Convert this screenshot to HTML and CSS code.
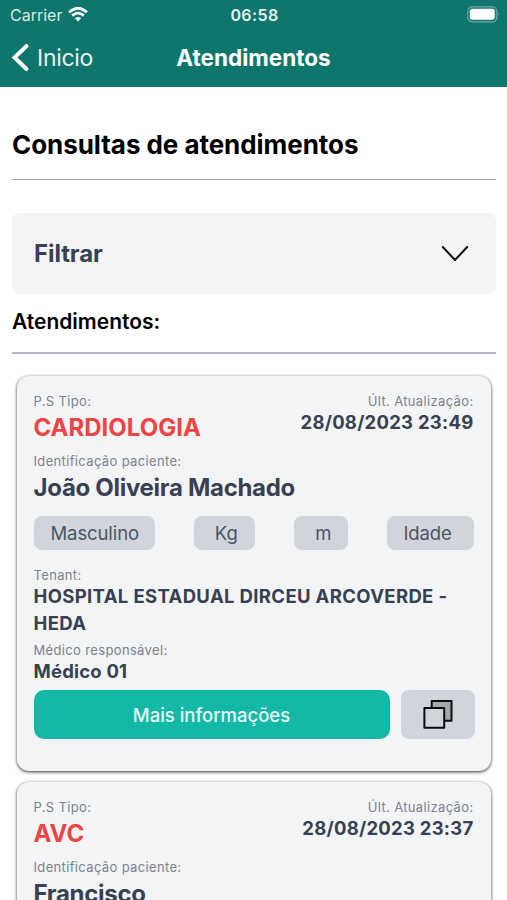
FILE: index.html
```html
<!DOCTYPE html>
<html lang="pt-BR">
<head>
<meta charset="utf-8">
<title>Atendimentos</title>
<link rel="stylesheet" href="styles.css">
</head>
<body>
<header class="top">
  <div class="status">
    <div class="carrier"><span>Carrier</span>
      <svg width="20" height="15" viewBox="0 0 20 15" fill="none" stroke="#fff" stroke-width="2.8"><path d="M1 5.2Q10-2.7 19 5.2M4.2 8.6Q10 3.7 15.8 8.6"/><path d="M6.9 11.3Q10 8.8 13.1 11.3L10 14.4Z" fill="#fff" stroke="none"/></svg>
    </div>
    <span class="clock">06:58</span>
    <svg class="battery" width="34" height="17" viewBox="0 0 34 17"><rect x=".8" y=".8" width="29" height="15" rx="4.5" fill="none" stroke="#6fa9a3" stroke-width="1.2"/><rect x="2.8" y="2.8" width="25" height="11" rx="2.8" fill="#fff"/><path d="M31.5 6q1.6 2.4 0 4.8z" fill="#6fa9a3"/></svg>
  </div>
  <nav class="nav">
    <a class="back"><svg width="18" height="30" viewBox="0 0 18 30" fill="none" stroke="#fff" stroke-width="3.9" stroke-linecap="round"><path d="M15.5 3 3.5 14.5 15.5 26"/></svg><span>Inicio</span></a>
    <span class="nav-title">Atendimentos</span>
    <span></span>
  </nav>
</header>
<main class="page">
  <h1 class="heading">Consultas de atendimentos</h1>
  <section class="filter"><span>Filtrar</span>
    <svg width="28" height="16" viewBox="0 0 28 16" fill="none" stroke="#111" stroke-width="2" stroke-linecap="round" stroke-linejoin="round"><path d="M1.8 2 14 15 26.2 2"/></svg>
  </section>
  <h2 class="subheading">Atendimentos:</h2>
  <div class="list">
    <article class="card">
      <div class="card-head">
        <div><div class="label">P.S Tipo:</div><div class="type">CARDIOLOGIA</div></div>
        <div class="updated"><div class="label">Últ. Atualização:</div><div class="date">28/08/2023 23:49</div></div>
      </div>
      <div class="label">Identificação paciente:</div>
      <div class="patient">João Oliveira Machado</div>
      <div class="chips"><span class="chip chip-sex">Masculino</span><span class="chip chip-kg">Kg</span><span class="chip chip-m">m</span><span class="chip chip-age">Idade</span></div>
      <div class="label">Tenant:</div>
      <div class="tenant">HOSPITAL ESTADUAL DIRCEU ARCOVERDE - HEDA</div>
      <div class="label">Médico responsável:</div>
      <div class="doctor">Médico 01</div>
      <div class="actions">
        <button class="more">Mais informações</button>
        <button class="copy"><svg width="30" height="30" viewBox="0 0 30 30" stroke="#0b0c0e" stroke-width="2" stroke-linejoin="round"><rect x="8.7" y="1" width="19.8" height="19.8" fill="#a5a8ac"/><rect x="1.4" y="8" width="19.8" height="19.8" fill="#d1d5db"/></svg></button>
      </div>
    </article>
    <article class="card">
      <div class="card-head">
        <div><div class="label">P.S Tipo:</div><div class="type">AVC</div></div>
        <div class="updated"><div class="label">Últ. Atualização:</div><div class="date">28/08/2023 23:37</div></div>
      </div>
      <div class="label">Identificação paciente:</div>
      <div class="patient">Francisco</div>
    </article>
  </div>
</main>
</body>
</html>
```
FILE: styles.css
```css
* { box-sizing: border-box; }
body {
  margin: 0;
  height: 900px;
  overflow: hidden;
  background: #fff;
  color: #000;
  font-family: Inter, "Liberation Sans", sans-serif;
}
svg { display: block; flex: none; }
.top { height: 87px; background: #0f766e; color: #fff; }
.status {
  height: 30px;
  padding: 0 8px 0 10px;
  display: grid;
  grid-template-columns: 1fr auto 1fr;
  align-items: center;
}
.carrier { display: flex; align-items: center; gap: 6px; font-size: 16px; letter-spacing: 0; color: #d6e9e7; }
.carrier svg { margin-top: -1px; }
.clock { font-size: 16px; font-weight: 600; letter-spacing: .4px; color: #e5f2f0; }
.battery { justify-self: end; margin: -1px -2px 0 0; }
.nav {
  height: 56px;
  padding: 0 11px;
  display: grid;
  grid-template-columns: 1fr auto 1fr;
  align-items: center;
}
.back { display: flex; align-items: center; gap: 8px; font-size: 23px; letter-spacing: -.3px; color: #e5f2f0; }
.nav-title { margin-top: -1px; font-size: 22.5px; font-weight: 700; }
.page { padding: 0 11px 0 12px; }
.heading {
  margin: 0;
  height: 93px;
  padding-top: 41px;
  border-bottom: 1px solid #a3a3ad;
  font-size: 26px;
  line-height: 34px;
  font-weight: 700;
  letter-spacing: -.05px;
}
.filter {
  margin-top: 32.5px;
  height: 81px;
  padding: 0 27px 0 22px;
  display: flex;
  align-items: center;
  justify-content: space-between;
  border-radius: 8px;
  background: #f3f4f6;
  color: #374151;
  font-size: 24px;
  font-weight: 700;
  letter-spacing: -.1px;
}
.subheading {
  margin: 0;
  height: 60.5px;
  padding-top: 15.5px;
  border-bottom: 2px solid #b5b5c3;
  font-size: 21px;
  line-height: 26px;
  font-weight: 600;
}
.list { padding: 22px 5px 0; display: grid; gap: 11px; }
.card {
  height: 395px;
  padding: 17px 16.5px 0 16.5px;
  border-radius: 12px;
  background: #f3f4f6;
  box-shadow: 0 1px 3.5px rgba(0, 0, 0, .8);
  color: #374151;
}
.label { height: 16px; line-height: 16px; font-size: 13px; letter-spacing: .35px; color: #7d828c; white-space: nowrap; }
.card-head { height: 59.5px; display: flex; justify-content: space-between; }
.type { line-height: 37px; font-size: 24px; font-weight: 700; color: #ef4444; }
.updated { text-align: right; margin-right: 1px; }
.date { line-height: 27px; font-size: 18.5px; font-weight: 700; letter-spacing: .25px; }
.patient { height: 47.5px; line-height: 37px; font-size: 24px; font-weight: 700; letter-spacing: -.3px; white-space: nowrap; }
.chips { height: 51px; display: flex; justify-content: space-between; }
.chip { height: 34px; line-height: 34px; border-radius: 8px; background: #d1d5db; color: #4b5563; font-size: 18.5px; letter-spacing: -.1px; }
.chip-sex { width: 121px; padding-left: 17px; }
.chip-kg { width: 61px; padding-left: 21px; }
.chip-m { width: 54px; padding-left: 21px; }
.chip-age { width: 87px; padding-left: 16px; }
.tenant { height: 59px; line-height: 27px; font-size: 18.5px; font-weight: 700; letter-spacing: .35px; }
.doctor { height: 32px; line-height: 26px; font-size: 18.5px; font-weight: 700; letter-spacing: .2px; }
.actions { display: flex; gap: 11px; height: 49px; }
.actions button { border: 0; padding: 0; font-family: inherit; }
.more { flex: 1; border-radius: 10px; background: #14b8a6; color: #e8faf7; font-size: 18.5px; font-weight: 500; letter-spacing: 0; }
.copy { width: 74px; display: grid; place-items: center; border-radius: 8px; background: #d1d5db; }
```
